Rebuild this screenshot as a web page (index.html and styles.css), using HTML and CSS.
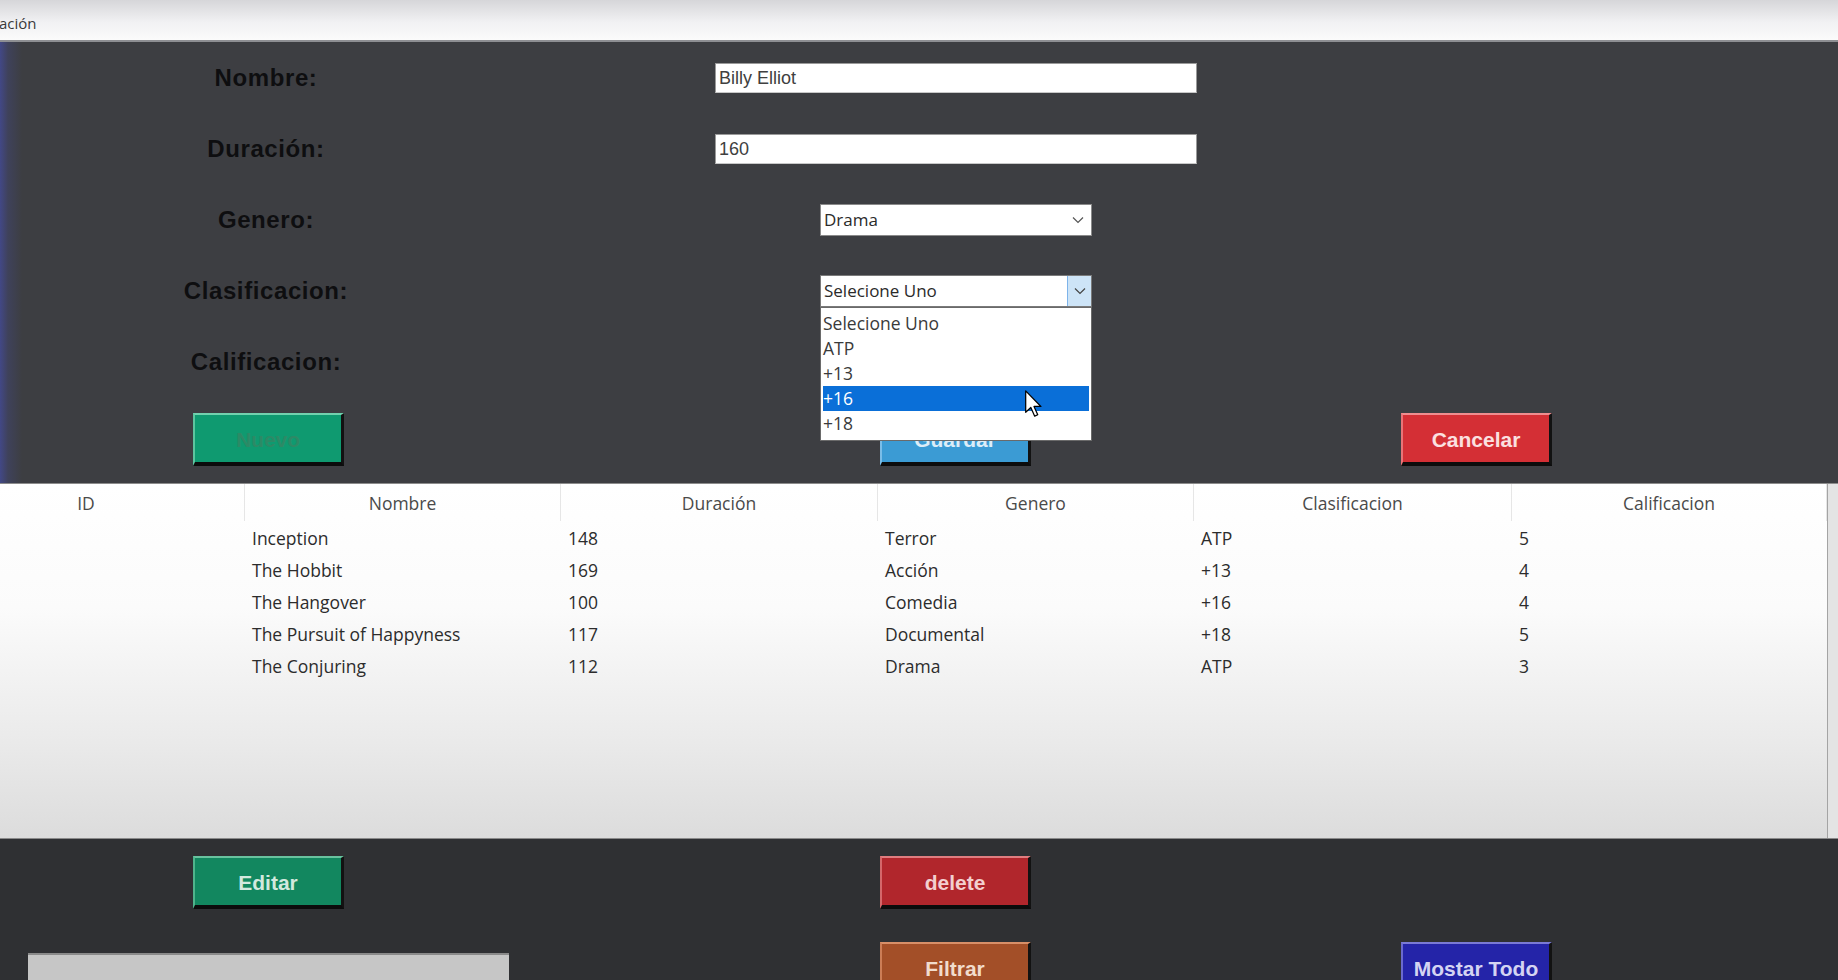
FILE: index.html
```html
<!DOCTYPE html>
<html lang="es">
<head>
<meta charset="utf-8">
<title>Peliculas</title>
<link rel="stylesheet" href="styles.css">
</head>
<body>
<div class="titlebar"><span class="title">ación</span></div>
<main class="app">
  <section class="top">
    <div class="form">
      <div class="label">Nombre:</div>
      <div class="field"><div class="input">Billy Elliot</div></div>
      <div class="label">Duración:</div>
      <div class="field"><div class="input">160</div></div>
      <div class="label">Genero:</div>
      <div class="field"><div class="select"><span>Drama</span><svg class="chev" width="12" height="8" viewBox="0 0 12 8"><path d="M1 1.5 L6 6.5 L11 1.5" fill="none" stroke="#555" stroke-width="1.2"/></svg></div></div>
      <div class="label">Clasificacion:</div>
      <div class="field">
        <div class="select open"><span>Selecione Uno</span><span class="dropbtn"><svg width="12" height="8" viewBox="0 0 12 8"><path d="M1 1.5 L6 6.5 L11 1.5" fill="none" stroke="#444" stroke-width="1.2"/></svg></span>
          <ul class="droplist">
            <li>Selecione Uno</li>
            <li>ATP</li>
            <li>+13</li>
            <li class="sel">+16</li>
            <li>+18</li>
          </ul>
          <svg class="cursor" width="18" height="28" viewBox="0 0 13 20"><path d="M0.5 0.5 L0.5 16 L4.2 12.5 L7 18.8 L9.2 17.8 L6.5 11.8 L11.5 11.8 Z" fill="#fff" stroke="#000" stroke-width="0.9" stroke-linejoin="round"/></svg>
        </div>
      </div>
      <div class="label">Calificacion:</div>
      <div class="field"></div>
    </div>
    <div class="btnrow">
      <div class="cell"><div class="btn nuevo">Nuevo</div></div>
      <div class="cell"><div class="btn guardar">Guardar</div></div>
      <div class="cell"><div class="btn cancelar">Cancelar</div></div>
    </div>
  </section>

  <section class="list">
    <div class="lv">
      <div class="row head">
        <div class="c c0 h">ID</div>
        <div class="c c1 h">Nombre</div>
        <div class="c c2 h">Duración</div>
        <div class="c c3 h">Genero</div>
        <div class="c c4 h">Clasificacion</div>
        <div class="c c5 h">Calificacion</div>
      </div>
      <div class="row"><div class="c c0"></div><div class="c c1">Inception</div><div class="c c2">148</div><div class="c c3">Terror</div><div class="c c4">ATP</div><div class="c c5">5</div></div>
      <div class="row"><div class="c c0"></div><div class="c c1">The Hobbit</div><div class="c c2">169</div><div class="c c3">Acción</div><div class="c c4">+13</div><div class="c c5">4</div></div>
      <div class="row"><div class="c c0"></div><div class="c c1">The Hangover</div><div class="c c2">100</div><div class="c c3">Comedia</div><div class="c c4">+16</div><div class="c c5">4</div></div>
      <div class="row"><div class="c c0"></div><div class="c c1">The Pursuit of Happyness</div><div class="c c2">117</div><div class="c c3">Documental</div><div class="c c4">+18</div><div class="c c5">5</div></div>
      <div class="row"><div class="c c0"></div><div class="c c1">The Conjuring</div><div class="c c2">112</div><div class="c c3">Drama</div><div class="c c4">ATP</div><div class="c c5">3</div></div>
    </div>
  </section>

  <section class="bottom">
    <div class="cell"><div class="btn editar">Editar</div></div>
    <div class="cell"><div class="btn delete">delete</div></div>
    <div class="cell"></div>
    <div class="cell"><div class="searchbox"></div></div>
    <div class="cell"><div class="btn filtrar">Filtrar</div></div>
    <div class="cell"><div class="btn mostrar">Mostar Todo</div></div>
  </section>
</main>
</body>
</html>
```

FILE: styles.css
```css
* { box-sizing: border-box; }

html, body {
  margin: 0;
  padding: 0;
  width: 1838px;
  height: 980px;
  overflow: hidden;
  background: #2f3033;
}

.titlebar {
  height: 42px;
  background: linear-gradient(to bottom, #d6d6d9 0%, #f1f1f3 55%, #fbfbfb 100%);
  border-bottom: 2px solid #8e8f93;
  display: flex;
  align-items: center;
}

.title {
  font: 15px "Open Sans", "Noto Sans", sans-serif;
  color: #3a3a3a;
  margin-left: -1px;
  padding-top: 6px;
}

.app {
  display: flex;
  flex-direction: column;
}

.top {
  height: 441px;
  background:
    linear-gradient(to right, rgba(70, 80, 190, 0.55) 0px, rgba(70, 80, 190, 0.2) 8px, rgba(70, 80, 190, 0) 22px),
    #3d3e42;
  position: relative;
}

.form {
  display: grid;
  grid-template-columns: 532px 848px;
  grid-auto-rows: 71px;
  align-items: center;
  justify-items: center;
}

.label {
  font: bold 24px "Liberation Sans", Arial, sans-serif;
  letter-spacing: 0.6px;
  color: #0e0e10;
}

.field {
  position: relative;
  width: 100%;
  height: 100%;
  display: flex;
  align-items: center;
  justify-content: center;
}

.input {
  width: 482px;
  height: 30px;
  background: #fff;
  border: 1px solid #9a9a9a;
  border-bottom-color: #c8c8c8;
  font: 18px "Liberation Sans", Arial, sans-serif;
  color: #404040;
  padding: 4px 0 0 3px;
  line-height: 20px;
}

.select {
  position: relative;
  width: 272px;
  height: 32px;
  background: #fff;
  border: 1px solid #8a8a8a;
  font: 17px "Open Sans", "Noto Sans", sans-serif;
  color: #2a2a2a;
  display: flex;
  align-items: center;
  padding-left: 3px;
}

.select span:first-child { flex: 1; }

.chev { margin-right: 7px; }

.select.open { border-color: #7a7a7a; }

.dropbtn {
  width: 24px;
  height: 30px;
  background: #cde4f7;
  border-left: 1px solid #7eb4ea;
  display: flex;
  align-items: center;
  justify-content: center;
}

.droplist {
  position: absolute;
  left: -1px;
  top: 31px;
  width: 272px;
  margin: 0;
  padding: 3px 2px 4px 2px;
  list-style: none;
  background: #fff;
  border: 1px solid #6a6a6a;
  z-index: 5;
}

.droplist li {
  height: 25px;
  line-height: 25px;
  padding-left: 0;
  font: 17.5px "Open Sans", "Noto Sans", sans-serif;
  color: #3a3a3a;
}

.droplist li.sel {
  background: #0a6fd8;
  color: #fff;
}

.cursor {
  position: absolute;
  left: 204px;
  top: 114px;
  z-index: 6;
}

.btnrow {
  display: grid;
  grid-template-columns: 537px 837px 205px;
  margin-top: 16px;
  justify-items: center;
}

.cell {
  display: flex;
  justify-content: center;
}

.btn {
  width: 151px;
  height: 53px;
  border-style: solid;
  border-width: 2px 3px 4px 2px;
  border-right-color: #121212;
  border-bottom-color: #0c0c0c;
  font: bold 21px "Liberation Sans", Arial, sans-serif;
  display: flex;
  align-items: center;
  justify-content: center;
  padding-top: 3px;
}

.nuevo {
  background: #0f9a70;
  border-top-color: #72d1ae;
  border-left-color: #5cc59f;
  color: #2c8a66;
}

.guardar {
  background: #3b9bd4;
  border-top-color: #8fcaf0;
  border-left-color: #7abde8;
  color: #dcedf8;
}

.cancelar {
  background: #d42f35;
  border-top-color: #f08d8f;
  border-left-color: #ea7477;
  color: #fbe0e0;
}

.editar {
  background: #12875f;
  border-top-color: #69c29f;
  border-left-color: #4fb48c;
  color: #d2e9de;
}

.delete {
  background: #b1262c;
  border-top-color: #e07d80;
  border-left-color: #d4676a;
  color: #f3cfcf;
}

.filtrar {
  background: #a34f28;
  border-top-color: #d88f68;
  border-left-color: #cc7d56;
  color: #f1dccd;
}

.mostrar {
  background: #2424a8;
  border-top-color: #7a7ad6;
  border-left-color: #6a6ace;
  color: #d4d4f2;
}

.list {
  height: 356px;
  background: #e4e4e4;
  border-top: 1px solid #8c8c8c;
  border-bottom: 1px solid #8a8a8a;
}

.lv {
  width: 1828px;
  height: 100%;
  border-right: 1px solid #a4a4a4;
  background: linear-gradient(to bottom, #ffffff 0%, #fbfbfb 35%, #e9e9e9 75%, #dcdcdc 100%);
}

.row {
  display: flex;
  height: 32px;
  align-items: center;
  font: 17.5px "Open Sans", "Noto Sans", sans-serif;
  color: #2c2c2c;
  padding-top: 1px;
}

.row.head {
  height: 37px;
  color: #4a4a4a;
  padding-top: 0;
}

.c { padding-left: 8px; white-space: nowrap; }
.c0 { width: 244px; }
.c1 { width: 316px; }
.c2 { width: 317px; }
.c3 { width: 316px; }
.c4 { width: 318px; }
.c5 { width: 316px; }

.c.h {
  height: 100%;
  display: flex;
  align-items: center;
  justify-content: center;
  padding-left: 0;
  border-left: 1px solid #e6e6e6;
}

.c0.h {
  border-left: none;
  padding-right: 72px;
}

.c5.h { border-right: 1px solid #e6e6e6; }

.bottom {
  height: 141px;
  display: grid;
  grid-template-columns: 537px 837px 205px;
  grid-template-rows: 53px 38px;
  row-gap: 33px;
  padding-top: 17px;
  background: #2f3033;
}

.searchbox {
  width: 481px;
  height: 30px;
  margin-top: 11px;
  background: #c6c6c6;
  border-top: 2px solid #8a8a8a;
}
```
